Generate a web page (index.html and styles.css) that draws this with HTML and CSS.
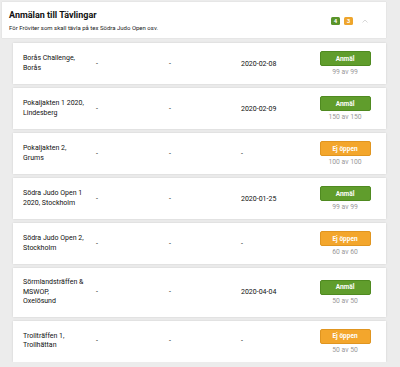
FILE: index.html
```html
<!DOCTYPE html>
<html>
<head>
  <meta charset="UTF-8">
  <title>Anmälan till Tävlingar</title>
  <link rel="stylesheet" href="styles.css">
</head>
<body>
  <div class="page">
    <div class="panel-head">
      <div class="head-text">
        <div class="head-title">Anmälan till Tävlingar</div>
        <div class="head-sub">För Fröviter som skall tävla på tex Södra Judo Open osv.</div>
      </div>
      <span class="badge badge-green">4</span>
      <span class="badge badge-orange">3</span>
      <svg class="chevron" width="6" height="4" viewBox="0 0 6 4"><path d="M0.5 3.5 L3 1 L5.5 3.5" fill="none" stroke="#d8d8d8" stroke-width="1"/></svg>
    </div>

    <div class="list">
      <div class="row">
        <div class="name">Borås Challenge,<br>Borås</div>
        <div class="cell">-</div>
        <div class="cell">-</div>
        <div class="cell">2020-02-08</div>
        <div class="action"><span class="btn btn-green">Anmäl</span><span class="count">99 av 99</span></div>
      </div>
      <div class="row">
        <div class="name">Pokaljakten 1 2020,<br>Lindesberg</div>
        <div class="cell">-</div>
        <div class="cell">-</div>
        <div class="cell">2020-02-09</div>
        <div class="action"><span class="btn btn-green">Anmäl</span><span class="count">150 av 150</span></div>
      </div>
      <div class="row">
        <div class="name">Pokaljakten 2,<br>Grums</div>
        <div class="cell">-</div>
        <div class="cell">-</div>
        <div class="cell">-</div>
        <div class="action"><span class="btn btn-orange">Ej öppen</span><span class="count">100 av 100</span></div>
      </div>
      <div class="row">
        <div class="name">Södra Judo Open 1<br>2020, Stockholm</div>
        <div class="cell">-</div>
        <div class="cell">-</div>
        <div class="cell">2020-01-25</div>
        <div class="action"><span class="btn btn-green">Anmäl</span><span class="count">99 av 99</span></div>
      </div>
      <div class="row">
        <div class="name">Södra Judo Open 2,<br>Stockholm</div>
        <div class="cell">-</div>
        <div class="cell">-</div>
        <div class="cell">-</div>
        <div class="action"><span class="btn btn-orange">Ej öppen</span><span class="count">60 av 60</span></div>
      </div>
      <div class="row">
        <div class="name">Sörmlandsträffen &amp;<br>MSWOP,<br>Oxelösund</div>
        <div class="cell">-</div>
        <div class="cell">-</div>
        <div class="cell">2020-04-04</div>
        <div class="action"><span class="btn btn-green">Anmäl</span><span class="count">50 av 50</span></div>
      </div>
      <div class="row">
        <div class="name">Trollträffen 1,<br>Trollhättan</div>
        <div class="cell">-</div>
        <div class="cell">-</div>
        <div class="cell">-</div>
        <div class="action"><span class="btn btn-orange">Ej öppen</span><span class="count">50 av 50</span></div>
      </div>
    </div>
  </div>
</body>
</html>
```

FILE: styles.css
```css
body {
  margin: 0;
  padding: 0;
  background-color: #ececec;
  font-family: Roboto, "Liberation Sans", sans-serif;
  color: #111;
}

.page {
  width: 384px;
  padding: 2px 0 0 2px;
}

.panel-head {
  background-color: #fff;
  height: 36px;
  display: flex;
  align-items: center;
  padding: 0 18px 0 7px;
  box-shadow: 0 0 1px rgba(0, 0, 0, 0.15);
}

.head-text {
  flex: 1;
}

.head-title {
  font-size: 9px;
  font-weight: bold;
  color: #111;
}

.head-sub {
  font-size: 6px;
  color: #222;
  margin-top: 4px;
}

.badge {
  width: 9px;
  height: 8px;
  border-radius: 1.5px;
  color: #fff;
  font-size: 6px;
  font-weight: bold;
  display: flex;
  align-items: center;
  justify-content: center;
  margin-left: 4px;
  margin-top: 1px;
}

.badge-green {
  background-color: #5a942a;
}

.badge-orange {
  background-color: #eea52c;
}

.chevron {
  margin-left: 9px;
  margin-top: 1px;
}

.list {
  margin: 5px 0 0 11px;
  display: flex;
  flex-direction: column;
  gap: 4px;
}

.row {
  background-color: #fff;
  min-height: 41px;
  display: grid;
  grid-template-columns: 73px 73px 72px 1fr 52px;
  align-items: center;
  padding: 0 15px 0 10px;
  box-shadow: 0 0 2px rgba(0, 0, 0, 0.12);
  font-size: 7px;
}

.name {
  line-height: 9.5px;
  color: #111;
  padding: 10px 0;
}

.cell {
  color: #111;
}

.action {
  display: flex;
  flex-direction: column;
  align-items: center;
}

.btn {
  width: 51px;
  height: 15px;
  border-radius: 2px;
  color: #fff;
  font-weight: bold;
  font-size: 6.5px;
  display: flex;
  align-items: center;
  justify-content: center;
  box-sizing: border-box;
}

.btn-green {
  background-color: #609d2c;
  border: 1px solid #4f8a20;
}

.btn-orange {
  background-color: #f3a62c;
  border: 1px solid #e09520;
}

.count {
  color: #999;
  font-size: 6.8px;
  margin-top: 2px;
}
```
